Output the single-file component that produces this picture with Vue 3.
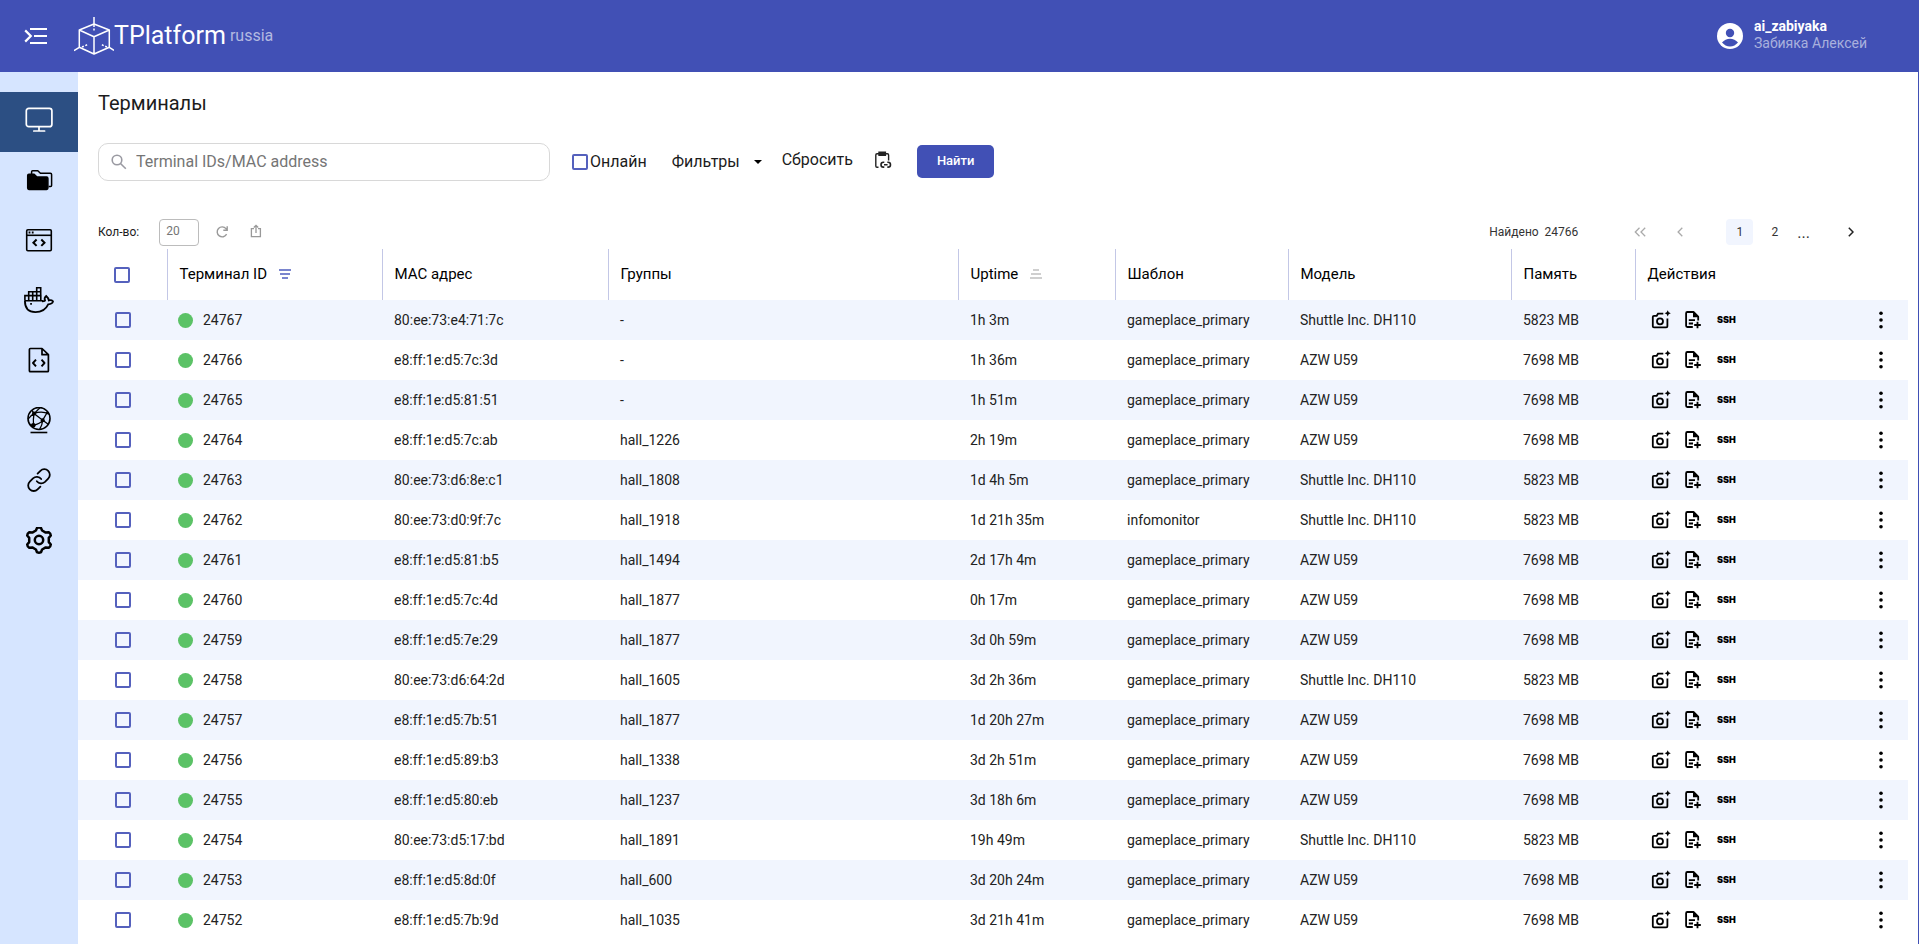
<script setup>
import { ref } from 'vue'

const SHUTTLE = 'Shuttle Inc. DH110'
const AZW = 'AZW U59'

const search = ref('')
const perPage = ref('20')

const columns = [
  { key: 'check', width: 89 },
  { key: 'id', title: 'Терминал ID', width: 215, sort: 'desc' },
  { key: 'mac', title: 'MAC адрес', width: 226 },
  { key: 'group', title: 'Группы', width: 350 },
  { key: 'uptime', title: 'Uptime', width: 157, sort: 'asc' },
  { key: 'template', title: 'Шаблон', width: 173 },
  { key: 'model', title: 'Модель', width: 223 },
  { key: 'memory', title: 'Память', width: 124 },
  { key: 'actions', title: 'Действия', width: 273 },
]

const rows = [
  ['24767', '80:ee:73:e4:71:7c', '-', '1h 3m', 'gameplace_primary', SHUTTLE],
  ['24766', 'e8:ff:1e:d5:7c:3d', '-', '1h 36m', 'gameplace_primary', AZW],
  ['24765', 'e8:ff:1e:d5:81:51', '-', '1h 51m', 'gameplace_primary', AZW],
  ['24764', 'e8:ff:1e:d5:7c:ab', 'hall_1226', '2h 19m', 'gameplace_primary', AZW],
  ['24763', '80:ee:73:d6:8e:c1', 'hall_1808', '1d 4h 5m', 'gameplace_primary', SHUTTLE],
  ['24762', '80:ee:73:d0:9f:7c', 'hall_1918', '1d 21h 35m', 'infomonitor', SHUTTLE],
  ['24761', 'e8:ff:1e:d5:81:b5', 'hall_1494', '2d 17h 4m', 'gameplace_primary', AZW],
  ['24760', 'e8:ff:1e:d5:7c:4d', 'hall_1877', '0h 17m', 'gameplace_primary', AZW],
  ['24759', 'e8:ff:1e:d5:7e:29', 'hall_1877', '3d 0h 59m', 'gameplace_primary', AZW],
  ['24758', '80:ee:73:d6:64:2d', 'hall_1605', '3d 2h 36m', 'gameplace_primary', SHUTTLE],
  ['24757', 'e8:ff:1e:d5:7b:51', 'hall_1877', '1d 20h 27m', 'gameplace_primary', AZW],
  ['24756', 'e8:ff:1e:d5:89:b3', 'hall_1338', '3d 2h 51m', 'gameplace_primary', AZW],
  ['24755', 'e8:ff:1e:d5:80:eb', 'hall_1237', '3d 18h 6m', 'gameplace_primary', AZW],
  ['24754', '80:ee:73:d5:17:bd', 'hall_1891', '19h 49m', 'gameplace_primary', SHUTTLE],
  ['24753', 'e8:ff:1e:d5:8d:0f', 'hall_600', '3d 20h 24m', 'gameplace_primary', AZW],
  ['24752', 'e8:ff:1e:d5:7b:9d', 'hall_1035', '3d 21h 41m', 'gameplace_primary', AZW],
].map(([id, mac, group, uptime, template, model]) => ({
  id, mac, group, uptime, template, model,
  memory: model === SHUTTLE ? '5823 MB' : '7698 MB',
}))
</script>

<template>
  <div class="app">
    <header class="topbar">
      <button class="icon-btn" type="button" aria-label="Меню">
        <svg width="24" height="18" viewBox="0 0 24 18" fill="none" stroke="#fff" stroke-width="2.2">
          <path d="M1.2 3.4 6.8 9 1.2 14.6M6 2h17M10 9h13M6 16h17" />
        </svg>
      </button>
      <a class="brand" href="#">
        <svg width="40" height="40" viewBox="0 0 40 40" fill="none" stroke="#fff" stroke-width="1.5" stroke-linejoin="round">
          <path d="M20 8 35.3 14v17.3L20 38 5.3 31.3V14ZM5.3 14 20 20.7 35.3 14M20 20.7V38M20 1v7M5.3 31.3 0 34.7M35.3 31.3l4.7 3.2" />
          <path d="M20 9v5.5M8 31l6-2.6M33 31l-6-2.6" stroke-dasharray="2 1.6" />
        </svg>
        <span class="brand-name">TPlatform</span>
        <span class="brand-region">russia</span>
      </a>
      <button class="user" type="button">
        <svg width="26" height="26" viewBox="0 0 26 26">
          <circle cx="13" cy="13" r="13" fill="#fff" />
          <circle cx="13" cy="10" r="4.2" fill="#4150b5" />
          <path d="M5 19.6c2-2.6 5-3.9 8-3.9s6 1.3 8 3.9a10.3 10.3 0 0 1-16 0Z" fill="#4150b5" />
        </svg>
        <span class="user-text">
          <span class="login">ai_zabiyaka</span>
          <span class="fullname">Забияка Алексей</span>
        </span>
      </button>
    </header>

    <div class="body">
      <nav class="sidebar">
        <a class="active" href="#" aria-label="Терминалы">
          <svg viewBox="0 0 30 30" fill="none" stroke="#fff" stroke-width="1.7" stroke-linecap="round">
            <rect x="2.3" y="1.3" width="25.6" height="18.4" rx="2.5" />
            <path d="M15 20v4M9.8 24h10.8" />
          </svg>
        </a>
        <a href="#" aria-label="Папки">
          <svg viewBox="0 0 30 30" fill="none" stroke="#000" stroke-width="1.5" stroke-linejoin="round">
            <path d="M7.6 7V4.7q0-1 1-1h5.2l2.6 2.6h10q1.2 0 1.2 1.2v11q0 1-1 1h-2" />
            <path fill="#000" d="M3.7 8.5q0-1.2 1.2-1.2h5.2l2.8 2.8h9.7q1.3 0 1.3 1.3v9.7q0 1.3-1.3 1.3H4.9q-1.2 0-1.2-1.3Z" />
          </svg>
        </a>
        <a href="#" aria-label="Шаблоны">
          <svg viewBox="0 0 30 30" fill="none" stroke="#000" stroke-width="1.6">
            <rect x="2.7" y="2.7" width="24.6" height="21" rx="1.2" />
            <path d="M2.7 8.3h24.6" />
            <path d="M4.6 5.5h1.8M7.8 5.5h1.8" stroke-width="1.8" />
            <path d="m12.6 12.5-3.2 3.2 3.2 3.2M17.3 12.5l3.2 3.2-3.2 3.2" stroke-width="2" />
          </svg>
        </a>
        <a href="#" aria-label="Docker">
          <svg viewBox="0 0 30 30" fill="none" stroke="#000" stroke-width="1.6">
            <path d="M.9 13.7V8.6h15.9v5.1M4.7 13.7V4.7h12M8.7 4.7v9M12.7 13.7V.8h4v7.8M.9 13.7h18" />
            <path stroke-width="1.8" d="M.9 13.7c0 7.500 3.800 11.400 10.500 11.400 6.600 0 10.600-3 12.800-7.800 2.700-.2 4.500-1.300 4.800-3-1-1-2.600-1.300-4.200-.9-.3-1.800-1.200-3.200-2.600-4.400-1.700 1.300-1.900 3-1.200 4.700-.6.600-1.600.700-3 .700" />
            <path d="M6.2 16.9h1.7" stroke-width="1.7" />
          </svg>
        </a>
        <a href="#" aria-label="Скрипты">
          <svg viewBox="0 0 30 30" fill="none" stroke="#000" stroke-width="1.7" stroke-linejoin="round">
            <path d="M18 1.500H6.400q-1 0-1 1v21.200q0 1 1 1h17q1 0 1-1V7.700ZM18 1.500v6.200h6.400" />
            <path d="m12 12.700-3 3.300 3 3.300M17.500 12.700l3 3.300-3 3.300" stroke-width="1.9" />
          </svg>
        </a>
        <a href="#" aria-label="Сеть">
          <svg viewBox="0 0 30 30" fill="none" stroke="#000" stroke-width="1.3">
            <circle cx="15" cy="11.5" r="11" stroke-width="1.6" />
            <path d="M8 3.300 10 6.600l8.700 6.600 5.200 3.800M10 6.600q8-3 15 .5M10 6.600Q6.500 8.500 4.200 12M10 6.600q-1 6-.5 11.500M9.300 18.200q7-1.200 9.400-5L23.500 5M18.700 13.200q-.5 5-3 9M9.300 18.200 6 18M10 6.600 16 .8" />
            <g fill="#000" stroke="none">
              <circle cx="10" cy="6.6" r="2" /><circle cx="18.7" cy="13.2" r="2" />
              <circle cx="9.3" cy="18.2" r="2.3" /><circle cx="23.2" cy="5.8" r="1.2" />
            </g>
            <path d="M6.500 25.500h16.800" stroke-width="1.6" />
          </svg>
        </a>
        <a href="#" aria-label="Ссылки">
          <svg viewBox="0 0 30 30" fill="none" stroke="#000" stroke-width="1.8" stroke-linecap="round">
            <path d="M12.800 14.200a5.600 5.600 0 0 0 8.200.6l3.200-3.200a5.500 5.500 0 0 0-7.800-7.800l-2.800 2.800" />
            <path d="M17.200 12a5.600 5.600 0 0 0-8.200-.6l-3.200 3.200a5.500 5.500 0 0 0 7.800 7.800l2.800-2.800" />
          </svg>
        </a>
        <a href="#" aria-label="Настройки">
          <svg viewBox="-1 1 30 30" fill="none" stroke="#000" stroke-width="2.5" stroke-linejoin="round">
            <path d="M10.900 4.500 12 1.900q2-1 4 0l1.100 2.600 3.600 2.100 3.100-.3q1.900 1.300 2 3.200l-2 2.400v4.200l2 2.400q-.1 2-2 3.300l-3.100-.4-3.600 2.100-1.100 2.700q-2 1-4 0l-1.100-2.700-3.600-2.100-3.100.4q-1.900-1.300-2-3.300l2-2.400v-4.200l-2-2.400q.1-1.900 2-3.200l3.100.3Z" />
            <circle cx="14" cy="14" r="4.2" />
          </svg>
        </a>
      </nav>

      <main class="content">
        <h1>Терминалы</h1>

        <form class="filters" @submit.prevent>
          <label class="search">
            <svg width="16" height="16" viewBox="0 0 16 16" fill="none" stroke="#9a9aa2" stroke-width="1.6">
              <circle cx="6" cy="6" r="4.8" /><path d="m9.500 9.500 5.300 5.300" />
            </svg>
            <input v-model="search" type="text" placeholder="Terminal IDs/MAC address" aria-label="Terminal IDs/MAC address" />
          </label>
          <label class="online"><input class="box" type="checkbox" />Онлайн</label>
          <div class="select">
            <select aria-label="Фильтры"><option>Фильтры</option></select>
            <svg width="8" height="4" viewBox="0 0 8 4"><path d="M0 0h8L4 4Z" fill="#000" /></svg>
          </div>
          <button class="reset" type="reset">Сбросить</button>
          <button class="icon-btn paste" type="button" aria-label="Вставить из буфера">
            <svg width="18" height="18" viewBox="0 0 18 18" fill="none" stroke="#222" stroke-width="1.4">
              <path d="M4.500 16.200H3q-1.200 0-1.200-1.200V4q0-1.200 1.200-1.200h10.400q1.200 0 1.200 1.200v5.500M5 1.300h6.400v2.900H5Z" />
              <path d="M10.300 11.300H9.400a2.400 2.400 0 0 0 0 4.800h.9M13.300 11.300h.8a2.400 2.400 0 0 1 0 4.800h-.8M10 13.700h3.600" stroke-width="1.6" />
            </svg>
          </button>
          <button class="find" type="submit">Найти</button>
        </form>

        <div class="toolbar">
          <label class="count">Кол-во:<input v-model="perPage" type="text" /></label>
          <button class="icon-btn refresh" type="button" aria-label="Обновить">
            <svg width="14" height="14" viewBox="0 0 14 14" fill="none" stroke="#999" stroke-width="1.4">
              <path d="M11.600 9.200A5 5 0 1 1 11 3.600l1 1.200M12.200 1.200v4H8.300" />
            </svg>
          </button>
          <button class="icon-btn share" type="button" aria-label="Экспорт">
            <svg width="12" height="14" viewBox="0 0 12 14" fill="none" stroke="#999" stroke-width="1.3">
              <path d="M4 4.600H1.400v8h9v-8H8M6 9V1.500M3.800 3.500 6 1.300l2.200 2.200" />
            </svg>
          </button>
          <div class="pager">
            <span class="found">Найдено&nbsp; 24766</span>
            <button class="first" type="button" aria-label="Первая страница" disabled>
              <svg width="12" height="10" viewBox="0 0 12 10" fill="none" stroke="#aaa" stroke-width="1.3"><path d="M5.500.8 1.300 5l4.200 4.200M11.200.8 7 5l4.200 4.200" /></svg>
            </button>
            <button class="prev" type="button" aria-label="Предыдущая страница" disabled>
              <svg width="6" height="10" viewBox="0 0 6 10" fill="none" stroke="#aaa" stroke-width="1.3"><path d="M5.300.8 1.100 5l4.200 4.200" /></svg>
            </button>
            <button class="page current" type="button">1</button>
            <button class="page" type="button">2</button>
            <span class="dots">...</span>
            <button class="next" type="button" aria-label="Следующая страница">
              <svg width="6" height="10" viewBox="0 0 6 10" fill="none" stroke="#222" stroke-width="1.5"><path d="M.8.8 5 5 .8 9.200" /></svg>
            </button>
          </div>
        </div>

        <table>
          <colgroup>
            <col v-for="c in columns" :key="c.key" :style="{ width: c.width + 'px' }" />
          </colgroup>
          <thead>
            <tr>
              <th v-for="c in columns" :key="c.key" :class="c.key">
                <input v-if="c.key === 'check'" class="box" type="checkbox" aria-label="Выбрать все" />
                <span v-else class="head">
                  {{ c.title }}
                  <button v-if="c.sort" class="icon-btn sort" type="button" :aria-label="'Сортировать: ' + c.title">
                    <svg v-if="c.sort === 'desc'" width="12" height="10" viewBox="0 0 12 10" fill="#7a85ce">
                      <path d="M0 0h12v2H0zM1 4h10v2H1zM3 8h6v2H3z" />
                    </svg>
                    <svg v-else width="12" height="10" viewBox="0 0 12 10" fill="#cfcfcf">
                      <path d="M3 0h6v2H3zM1 4h10v2H1zM0 8h12v2H0z" />
                    </svg>
                  </button>
                </span>
              </th>
            </tr>
          </thead>
          <tbody>
            <tr v-for="r in rows" :key="r.id">
              <td class="check"><input class="box" type="checkbox" :aria-label="'Выбрать ' + r.id" /></td>
              <td class="id"><span class="terminal"><i class="status"></i>{{ r.id }}</span></td>
              <td>{{ r.mac }}</td>
              <td>{{ r.group }}</td>
              <td>{{ r.uptime }}</td>
              <td>{{ r.template }}</td>
              <td>{{ r.model }}</td>
              <td>{{ r.memory }}</td>
              <td>
                <div class="row-actions">
                  <button class="icon-btn" type="button" aria-label="Снимок экрана">
                    <svg width="20" height="20" viewBox="0 0 20 20" fill="none" stroke="#000" stroke-width="1.8">
                      <path d="M12.300 3.700H7L5.700 5.800H3q-1.200 0-1.200 1.200v9.200q0 1.200 1.200 1.200h12.200q1.200 0 1.200-1.200V8.600" />
                      <circle cx="9" cy="11.3" r="3" />
                      <path d="m16.700.2 1 2.100 2.100 1-2.100 1-1 2.100-1-2.100-2.100-1 2.100-1Z" fill="#000" stroke="none" />
                    </svg>
                  </button>
                  <button class="icon-btn" type="button" aria-label="Добавить файл">
                    <svg width="20" height="20" viewBox="0 0 20 20" fill="none" stroke="#000" stroke-width="1.8">
                      <path d="M8.800 17H3.300q-1.200 0-1.200-1.200V3.200Q2.100 2 3.300 2h6.200l4.700 4.700v3.700" stroke-linejoin="round" />
                      <path d="M9 1.500v5.700h5.700Z" fill="#000" stroke="none" />
                      <path d="M4.800 10.200h6.200M4.800 13.500h4.200M13.500 11.700v6.600M10.200 15h6.600" />
                    </svg>
                  </button>
                  <button class="ssh" type="button">SSH</button>
                  <button class="icon-btn more" type="button" aria-label="Ещё">
                    <svg width="4" height="18" viewBox="0 0 4 18"><circle cx="2" cy="2.2" r="1.8" /><circle cx="2" cy="9" r="1.8" /><circle cx="2" cy="15.8" r="1.8" /></svg>
                  </button>
                </div>
              </td>
            </tr>
          </tbody>
        </table>
      </main>
    </div>
  </div>
</template>

<style>
body {
  margin: 0;
  background: #fff;
}
</style>

<style scoped>
.app {
  display: flex;
  flex-direction: column;
  min-height: 100vh;
  font-family: Roboto, "Liberation Sans", sans-serif;
  color: #1c1c1c;
}

.app * {
  box-sizing: border-box;
}

button,
input,
select {
  font: inherit;
  color: inherit;
}

button {
  padding: 0;
  border: 0;
  background: none;
  cursor: pointer;
}

a {
  color: inherit;
  text-decoration: none;
}

svg {
  display: block;
  flex: none;
}

.icon-btn {
  display: flex;
}

.topbar {
  display: flex;
  align-items: center;
  height: 72px;
  padding: 0 52px 0 24px;
  background: #4150b5;
  color: #fff;
}

.brand {
  display: flex;
  align-items: center;
  margin-left: 26px;
}

.brand-name {
  font-size: 25px;
  line-height: 32px;
}

.brand-region {
  margin-left: 4px;
  font-size: 16px;
  line-height: 32px;
  color: #b3b9e1;
}

.user {
  display: flex;
  align-items: center;
  gap: 11px;
  margin-left: auto;
  text-align: left;
  font-size: 14px;
  line-height: 17px;
}

.user-text {
  display: flex;
  flex-direction: column;
  padding-bottom: 2px;
}

.login {
  font-weight: 700;
}

.fullname {
  color: #a9b0dd;
}

.body {
  display: flex;
  flex: 1;
  border-right: 1px solid #4150b5;
}

.sidebar {
  flex: none;
  width: 78px;
  padding-top: 20px;
  background: #d6e5ff;
}

.sidebar a {
  display: flex;
  align-items: center;
  justify-content: center;
  height: 60px;
}

.sidebar a.active {
  background: #2c4f83;
}

.sidebar svg {
  width: 30px;
  height: 30px;
}

.content {
  flex: 1;
  min-width: 0;
  padding-right: 10px;
}

h1 {
  margin: 18px 0 0 20px;
  font-size: 20px;
  line-height: 26px;
  font-weight: 400;
}

.filters {
  display: flex;
  align-items: center;
  margin: 27px 0 0 20px;
  font-size: 16px;
  line-height: 20px;
}

.search {
  display: flex;
  align-items: center;
  gap: 9px;
  width: 452px;
  height: 38px;
  padding: 0 12px;
  border: 1px solid #d8d8d8;
  border-radius: 10px;
}

.search input {
  flex: 1;
  min-width: 0;
  padding: 0;
  border: 0;
  outline: 0;
  background: none;
}

.search input::placeholder {
  color: #757575;
  opacity: 1;
}

.box {
  appearance: none;
  flex: none;
  display: block;
  width: 16px;
  height: 16px;
  margin: 0;
  border: 2px solid #5561bd;
  border-radius: 2px;
}

.box:checked {
  background: #4150b5;
}

.online {
  display: flex;
  align-items: center;
  gap: 2px;
  margin-left: 22px;
}

.select {
  display: flex;
  align-items: center;
  gap: 13px;
  margin-left: 25px;
}

.select select {
  appearance: none;
  padding: 0;
  border: 0;
  background: none;
}

.reset {
  margin: 0 0 4px 20px;
}

.paste {
  margin: 0 25px 4px 21px;
}

.find {
  height: 33px;
  margin-bottom: 2px;
  padding: 0 20px;
  border-radius: 5px;
  background: #4150b5;
  color: #fff;
  font-size: 13px;
  font-weight: 500;
}

.toolbar {
  display: flex;
  align-items: center;
  height: 28px;
  margin: 37px 0 0 20px;
  font-size: 12px;
  line-height: 16px;
}

.count {
  display: flex;
  align-items: center;
  gap: 20px;
}

.count input {
  width: 40px;
  height: 27px;
  padding: 0 6px 2px;
  border: 1px solid #bcbcbc;
  border-radius: 4px;
  color: #757575;
}

.refresh {
  margin-left: 16px;
}

.share {
  margin: 0 0 2px 21px;
}

.pager {
  display: flex;
  align-items: center;
  margin-left: auto;
  padding-right: 54px;
  color: #333;
}

.first {
  margin-left: 56px;
}

.prev {
  margin: 0 43px 0 31px;
}

.page {
  width: 27px;
  height: 26px;
  border-radius: 4px;
}

.page + .page {
  margin-left: 8px;
}

.page.current {
  background: #f1f5fe;
}

.dots {
  margin: 2px 38px 0 9px;
  font-size: 16px;
}

table {
  width: 100%;
  margin-top: 3px;
  table-layout: fixed;
  border-collapse: collapse;
  font-size: 14px;
  line-height: 20px;
  color: #222;
}

th {
  height: 51px;
  padding: 0 12px 2px;
  border-left: 1px solid #c3c7e6;
  font-size: 15px;
  font-weight: 400;
  text-align: left;
  color: #000;
}

th.check {
  border-left: 0;
  padding: 0 0 0 36px;
}

.head {
  display: flex;
  align-items: center;
  gap: 12px;
}

td {
  height: 40px;
  padding: 0 12px;
}

td.check {
  padding: 0 0 0 37px;
}

td.id {
  padding-left: 11px;
}

tbody tr:nth-child(odd) {
  background: #f1f5fe;
}

.terminal {
  display: flex;
  align-items: center;
  gap: 10px;
}

.status {
  width: 15px;
  height: 15px;
  border-radius: 50%;
  background: #5bc266;
}

.row-actions {
  display: flex;
  align-items: center;
  gap: 13px;
  padding: 0 13px 0 4px;
}

.ssh {
  font-family: Inter, "Liberation Sans", sans-serif;
  font-size: 9px;
  line-height: 12px;
  font-weight: 900;
  color: #000;
}

.more {
  margin-left: auto;
}
</style>
